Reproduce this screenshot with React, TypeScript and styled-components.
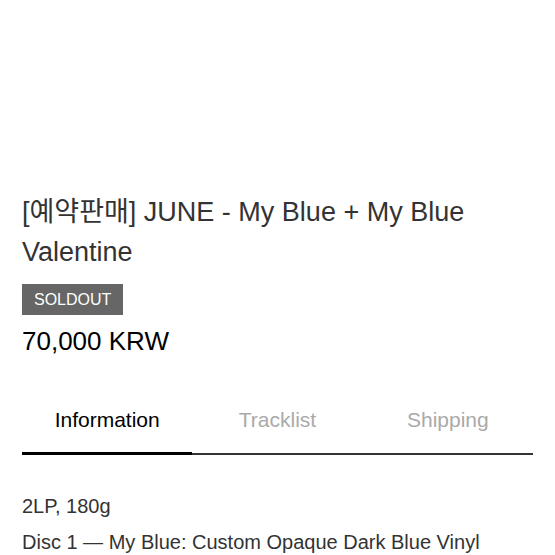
import React, { useState } from 'react';
import styled, { createGlobalStyle } from 'styled-components';

const GlobalStyle = createGlobalStyle`
  * { box-sizing: border-box; }
  body {
    margin: 0;
    background: #fff;
    color: #333;
    font-family: "Liberation Sans", "Noto Sans CJK KR", sans-serif;
  }
`;

const Page = styled.main`
  padding: 192px 22px 0;
`;

const Title = styled.h1`
  margin: 0;
  font-size: 27px;
  font-weight: 400;
  line-height: 40px;
`;

const SoldOut = styled.span`
  display: block;
  width: fit-content;
  margin-top: 12px;
  padding: 0 12px;
  background: #666;
  color: #fff;
  font-size: 16px;
  line-height: 31px;
`;

const Price = styled.p`
  margin: 10px 0 0;
  color: #000;
  font-size: 26px;
  line-height: 32px;
`;

const Tabs = styled.div`
  display: grid;
  grid-template-columns: repeat(3, 1fr);
  margin-top: 30px;
  border-bottom: 2px solid #333;
`;

const Tab = styled.button<{ $active: boolean }>`
  margin-bottom: -2px;
  padding: 19px 0 18px;
  border: 0;
  border-bottom: 3px solid ${({ $active }) => ($active ? '#000' : 'transparent')};
  background: none;
  color: ${({ $active }) => ($active ? '#000' : '#aaa')};
  font-family: inherit;
  font-size: 21px;
  line-height: 28px;
  cursor: pointer;
`;

const Panel = styled.div`
  padding-top: 33px;
  font-size: 20px;
  line-height: 36px;
`;

const Line = styled.p`
  margin: 0;
`;

const tabs = ['Information', 'Tracklist', 'Shipping'];

export default function App() {
  const [active, setActive] = useState(0);
  return (
    <>
      <GlobalStyle />
      <Page>
        <Title>[예약판매] JUNE - My Blue + My Blue Valentine</Title>
        <SoldOut>SOLDOUT</SoldOut>
        <Price>70,000 KRW</Price>
        <Tabs role="tablist">
          {tabs.map((label, i) => (
            <Tab
              key={label}
              id={`tab-${i}`}
              role="tab"
              aria-selected={active === i}
              aria-controls="panel"
              $active={active === i}
              onClick={() => setActive(i)}
            >
              {label}
            </Tab>
          ))}
        </Tabs>
        <Panel id="panel" role="tabpanel" aria-labelledby={`tab-${active}`}>
          {active === 0 && (
            <>
              <Line>2LP, 180g</Line>
              <Line>Disc 1 — My Blue: Custom Opaque Dark Blue Vinyl</Line>
            </>
          )}
        </Panel>
      </Page>
    </>
  );
}
